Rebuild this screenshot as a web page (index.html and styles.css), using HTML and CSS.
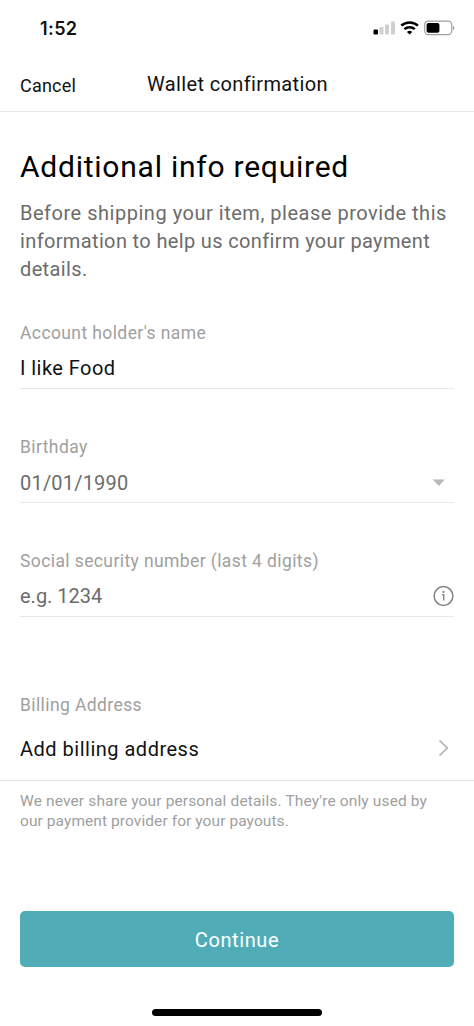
FILE: index.html
```
<!DOCTYPE html>
<html lang="en">
<head>
<meta charset="utf-8">
<meta name="viewport" content="width=device-width, initial-scale=1">
<title>Wallet confirmation</title>
<link rel="stylesheet" href="styles.css">
</head>
<body>
<div class="status">
  <span class="time">1:52</span>
  <svg class="status-icons" width="84" height="16" viewBox="0 0 84 16">
    <rect x="1.5" y="9.5" width="4.5" height="5" rx="1.2" fill="#000"/>
    <g fill="#d0d0d0">
      <rect x="7.5" y="7" width="4" height="7.5" rx="1"/>
      <rect x="13" y="4.5" width="4" height="10" rx="1"/>
      <rect x="19" y="1.5" width="4" height="13" rx="1"/>
    </g>
    <g fill="none" stroke="#000" stroke-width="2.5">
      <path d="M29.3 5.7a12.2 12.2 0 0 1 16.6 0"/>
      <path d="M32.4 9.2a7.6 7.6 0 0 1 10.4 0"/>
    </g>
    <path d="M34.9 11.9a4 4 0 0 1 5.4 0L37.6 14.6z" fill="#000"/>
    <rect x="52.7" y="1.2" width="27" height="13.4" rx="3.6" fill="none" stroke="#a0a0a0" stroke-width="1.2"/>
    <rect x="54.6" y="3" width="12.8" height="9.8" rx="1.8" fill="#000"/>
    <path d="M81 5.8c1.6.5 1.6 3.7 0 4.2z" fill="#8c8c8c"/>
  </svg>
</div>
<header class="nav">
  <span class="cancel">Cancel</span>
  <span class="title">Wallet confirmation</span>
</header>
<main class="content">
  <h1 class="heading">Additional info required</h1>
  <p class="intro">Before shipping your item, please provide this<br><span class="intro-rest">information to help us confirm your payment<br>details.</span></p>
  <section class="field">
    <div class="label">Account holder's name</div>
    <div class="value v-name">I like Food</div>
  </section>
  <section class="field">
    <div class="label">Birthday</div>
    <div class="value v-date"><span>01/01/1990</span>
      <svg class="caret" width="14" height="8" viewBox="0 0 14 8"><path d="M.7.6h12.1L6.8 6.9z" fill="#b8b8b8"/></svg>
    </div>
  </section>
  <section class="field">
    <div class="label">Social security number (last 4 digits)</div>
    <div class="value v-ssn"><span>e.g. 1234</span>
      <svg width="22" height="22" viewBox="0 0 22 22"><circle cx="11.5" cy="11" r="9.4" fill="none" stroke="#858585" stroke-width="1.5"/><circle cx="11.5" cy="6.9" r="1.1" fill="#858585"/><path d="M10 9.6h1.7v6" fill="none" stroke="#858585" stroke-width="1.4"/></svg>
    </div>
  </section>
</main>
<section class="billing">
  <div class="label">Billing Address</div>
  <div class="billing-row"><span>Add billing address</span>
    <svg class="chevron" width="12" height="18" viewBox="0 0 12 18"><path d="M1.5 1.5 9.2 9l-7.7 7.5" fill="none" stroke="#b2b2b2" stroke-width="1.7"/></svg>
  </div>
</section>
<p class="note">We never share your personal details. They're only used by<br><span class="note-end">our payment provider for your payouts.</span></p>
<button class="continue">Continue</button>
<div class="home"></div>
</body>
</html>
```
FILE: styles.css
```
* { box-sizing: border-box; }
body {
  margin: 0;
  width: 474px;
  height: 1026px;
  overflow: hidden;
  background: #fff;
  color: #111;
  font-family: Roboto, "Liberation Sans", sans-serif;
  white-space: nowrap;
  display: flex;
  flex-direction: column;
}
.status {
  height: 56px;
  padding: 1px 18px 0 40px;
  display: flex;
  justify-content: space-between;
  align-items: center;
}
.status-icons { margin-bottom: 1px; }
.time { font: 600 18px Inter, sans-serif; letter-spacing: .4px; color: #111; }
.nav {
  height: 56px;
  padding: 0 20px;
  border-bottom: 1px solid #e8e8e8;
  display: grid;
  grid-template-columns: 127px 1fr;
  align-items: start;
}
.cancel { font-size: 18px; line-height: 24px; margin-top: 18px; letter-spacing: .2px; }
.title { font-size: 20px; line-height: 24px; margin-top: 16px; letter-spacing: .37px; }
.content { padding: 0 20px; }
.heading { margin: 35px 0 0; font-size: 30px; font-weight: 400; line-height: 40px; letter-spacing: .76px; color: #000; }
.intro { margin: 13px 0 0; font-size: 20px; line-height: 27.8px; letter-spacing: .52px; color: #6c6c6c; height: 84px; }
.intro-rest { letter-spacing: .36px; }
.field { height: 114px; border-bottom: 1px solid #e8e8e8; display: flex; flex-direction: column; justify-content: flex-end; }
.field:first-of-type { height: 105px; }
.label { font-size: 17.5px; line-height: 24px; letter-spacing: .4px; color: #a0a0a0; }
.value { height: 43px; font-size: 20px; line-height: 24px; color: #6c6c6c; display: flex; justify-content: space-between; align-items: center; }
.v-name { padding-top: 3px; letter-spacing: .45px; color: #111; }
.v-date { padding-top: 5px; letter-spacing: .2px; }
.v-ssn { padding-top: 2px; }
.caret { margin-right: 8px; }
.billing { height: 164px; padding: 76px 24px 0 20px; border-bottom: 1px solid #e4e4e4; }
.billing-row { height: 63px; display: flex; align-items: center; justify-content: space-between; font-size: 20px; letter-spacing: .5px; color: #111; }
.chevron { margin-bottom: 2px; }
.note { margin: 10px 20px 0; font-size: 15.5px; line-height: 20.3px; letter-spacing: .14px; color: #a0a0a0; }
.note-end { letter-spacing: .08px; }
.continue { margin: 79px 20px 0; height: 56px; padding: 2px 0 0; border: 0; border-radius: 5px; background: #50adb8; color: #fff; font: 400 20px Roboto, sans-serif; letter-spacing: .6px; }
.home { width: 170px; height: 7px; margin: 42px auto 0; border-radius: 4px; background: #000; }
```
